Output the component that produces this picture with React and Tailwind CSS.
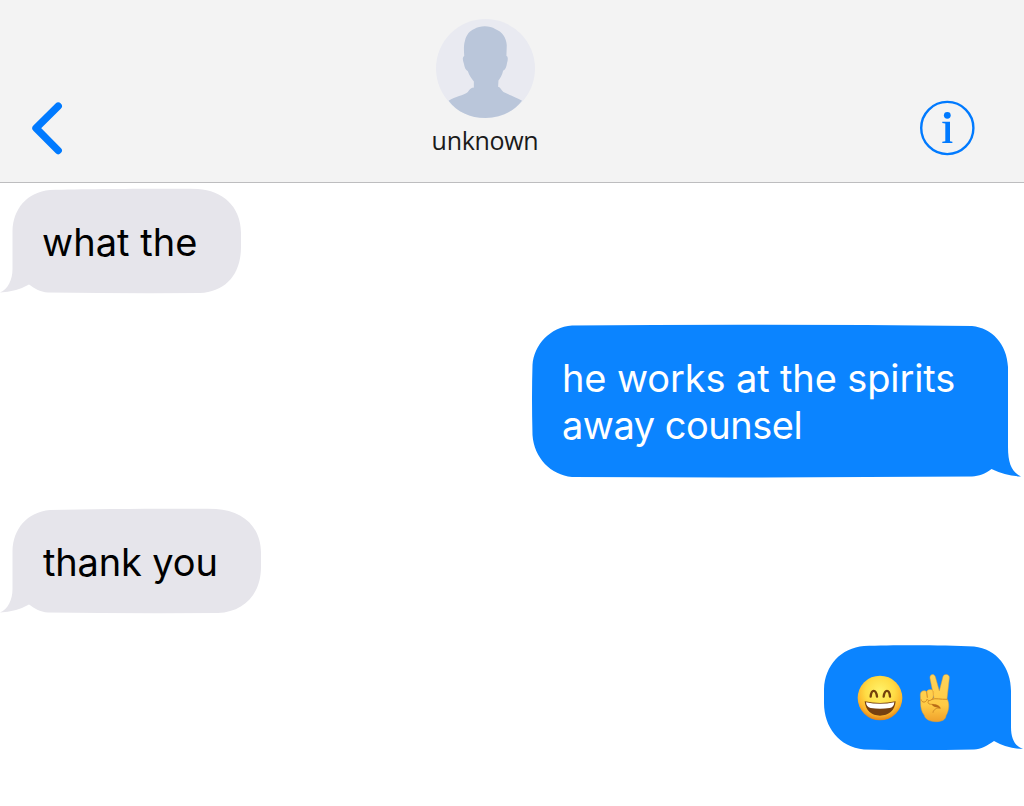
function BackIcon() {
  return (
    <svg width="34" height="54" viewBox="0 0 34 54" fill="none">
      <path d="M28.2 5.2L6 27.2L28.2 49.5" stroke="#007aff" strokeWidth="7.4" strokeLinecap="round" strokeLinejoin="round" />
    </svg>
  )
}

function InfoIcon() {
  return (
    <svg width="56" height="56" viewBox="0 0 56 56">
      <circle cx="28.3" cy="28" r="26.1" fill="none" stroke="#007aff" strokeWidth="2.4" />
      <circle cx="28.3" cy="15.3" r="3.4" fill="#007aff" />
      <path d="M23.3 21.8H31V41.3L33.4 41.8V43H23.3V41.8L26.3 41.3V23.6L23.3 23Z" fill="#007aff" />
    </svg>
  )
}

function Avatar() {
  return (
    <svg width="99" height="99" viewBox="47 26 298 298">
      <circle cx="196" cy="175" r="149" fill="#e9eaf1" />
      <path
        d="M85 272C105 260 130 256 143 246C150 234 155 233 161 232V214C152 203 146 193 143 183C136 180 133 172 131 161C127 150 126 140 132 137C131 122 130 105 134 92C139 72 149 61 162 56C180 45 210 46 225 56C246 64 259 82 260 105L259 137C264 137 264 148 261 158C259 170 257 178 249 182C246 196 240 205 235 211L234 230C242 232 243 240 250 246C270 256 290 262 306 272C280 306 240 324 196 324C150 324 110 306 85 272Z"
        fill="#bac6da"
      />
    </svg>
  )
}

function GrinEmoji() {
  return (
    <svg width="46" height="46" viewBox="0 0 138 138" role="img" aria-label="grinning face">
      <defs>
        <radialGradient id="face" cx="50%" cy="36%" r="65%">
          <stop offset="0" stopColor="#fff36b" />
          <stop offset="0.5" stopColor="#ffdc45" />
          <stop offset="0.8" stopColor="#fdb52b" />
          <stop offset="1" stopColor="#dc7c17" />
        </radialGradient>
      </defs>
      <circle cx="69" cy="69" r="67" fill="url(#face)" />
      <path d="M41 65C43 42 57 42 60 65M80 65C83 42 97 42 99 65" fill="none" stroke="#74410c" strokeWidth="7" strokeLinecap="round" />
      <path d="M23 79Q69 89 116 79C114 107 94 122 69 122C44 122 26 107 23 79Z" fill="#754011" />
      <path d="M27 82Q69 91 112 82C111 93 106 98 98 99Q69 103 41 99C32 97 28 92 27 82Z" fill="#fff" />
    </svg>
  )
}

function PeaceEmoji() {
  return (
    <svg width="32" height="50" viewBox="0 0 96 150" role="img" aria-label="victory hand">
      <defs>
        <linearGradient id="hand" x1="0" y1="0" x2="0" y2="1">
          <stop offset="0" stopColor="#ffd45a" />
          <stop offset="0.65" stopColor="#ffcb45" />
          <stop offset="1" stopColor="#efa02b" />
        </linearGradient>
      </defs>
      <path
        d="M33 16C31 5 44 0 49 11L61 54L72 11C75 0 93 3 91 15L84 78C92 89 91 112 81 128C80 139 70 146 51 146C30 146 18 137 16 127C7 116 5 103 5 91L4 65C4 51 20 51 23 57C25 47 42 47 44 57L42 76L45 75Z"
        fill="url(#hand)"
        stroke="#e5a033"
        strokeWidth="1.5"
      />
      <path
        d="M23 57L25 73M6 80C8 90 21 90 24 79C29 86 39 82 42 75M30 83C24 88 27 94 38 94C50 94 61 97 64 106C53 103 43 110 42 118M39 79C50 74 64 80 84 79"
        fill="none"
        stroke="#d08a25"
        strokeWidth="3"
        strokeLinecap="round"
      />
      <path d="M38 94C50 94 62 98 64 106C55 102 47 104 41 98Z" fill="#b96d17" />
    </svg>
  )
}

const messages = [
  {
    id: 1,
    side: 'left',
    lines: [{ text: 'what the', spacing: 'tracking-[0.05px]' }],
    size: 'w-[242px] h-[105px] pl-[42px] pt-[30px]',
    path: 'M50 1C90 0 160 -0.5 198 0C222 1.5 241 17 241 44V58C241 86 225 103 200 104Q125 104.5 48 103.5C40 103 34 99 29 95.5Q16 103 0 103.5C8 100 12.5 91 12.5 80V42C13 20 27 3 50 1Z',
  },
  {
    id: 2,
    side: 'right',
    lines: [
      { text: 'he works at the spirits', spacing: 'tracking-[-0.12px]' },
      { text: 'away counsel', spacing: 'tracking-[-0.5px]' },
    ],
    size: 'w-[492px] h-[153px] pl-[30px] pt-[30px]',
    path: 'M40 0.5Q230 -1 440 1C460 3 475 19 476 42V122C476 139 480 147 489 151.5Q474 151 459.5 144C453 149 447 151 440 151.5Q235 153 40 152C19 150 2 133 0.5 110Q-0.5 72 0.5 40C2 20 18 2 40 0.5Z',
  },
  {
    id: 3,
    side: 'left',
    lines: [{ text: 'thank you', spacing: 'tracking-[-0.15px]' }],
    size: 'w-[262px] h-[105px] pl-[43px] pt-[30px]',
    path: 'M50 1C100 0 175 -0.5 216 0C242 1.5 261 17 261 44V58C261 86 243 103 218 104Q125 104.5 48 103.5C40 103 34 99 29 95.5Q16 103 0 103.5C8 100 12.5 91 12.5 80V42C13 20 27 3 50 1Z',
  },
  {
    id: 4,
    side: 'right',
    emoji: true,
    size: 'w-[200px] h-[106px] pl-[33px] pt-[28px]',
    path: 'M40 1C70 0 120 0 150 1.5C173 4 187 23 187 46V82C187 94 191 101 199 104Q184 104 170 96C163 101 157 104 150 104.5Q90 105.5 40 104.5C15 102 0 82 0 58V44C1 20 17 3 40 1Z',
  },
]

function Bubble({ message }) {
  const mine = message.side === 'right'

  return (
    <div className={`relative ${message.size} ${mine ? 'self-end text-white' : 'self-start text-black'}`}>
      <svg className="absolute inset-0 w-full h-full overflow-visible" aria-hidden="true">
        <path d={message.path} fill={mine ? '#0b84ff' : '#e6e5eb'} />
      </svg>
      {message.emoji ? (
        <div className="relative flex items-start gap-[16px]">
          <span className="pt-[2px]"><GrinEmoji /></span>
          <PeaceEmoji />
        </div>
      ) : (
        <p className="relative whitespace-nowrap text-[38px] leading-[47px]">
          {message.lines.map(l => (
            <span key={l.text} className={`block ${l.spacing}`}>{l.text}</span>
          ))}
        </p>
      )}
    </div>
  )
}

export default function App() {
  return (
    <div className="w-[1024px] h-[806px] overflow-hidden bg-white font-['Inter',sans-serif]">
      {/* Header */}
      <header className="h-[183px] bg-[#f3f3f3] border-b border-[#bdbdbf] grid grid-cols-[435px_100px_1fr]">
        <button className="justify-self-start self-start mt-[101px] ml-[30px]" aria-label="Back">
          <BackIcon />
        </button>
        <div className="flex flex-col items-center pt-[19px]">
          <Avatar />
          <h1 className="mt-[5px] text-[25px] leading-[34px] tracking-[-0.3px] text-[#1a1a1a] whitespace-nowrap font-['Open_Sans',sans-serif]">unknown</h1>
        </div>
        <button className="justify-self-end self-start mt-[100px] mr-[49px]" aria-label="Info">
          <InfoIcon />
        </button>
      </header>

      {/* Messages */}
      <main className="flex flex-col gap-[31px] pt-[6px]">
        {messages.map(m => (
          <Bubble key={m.id} message={m} />
        ))}
      </main>
    </div>
  )
}
